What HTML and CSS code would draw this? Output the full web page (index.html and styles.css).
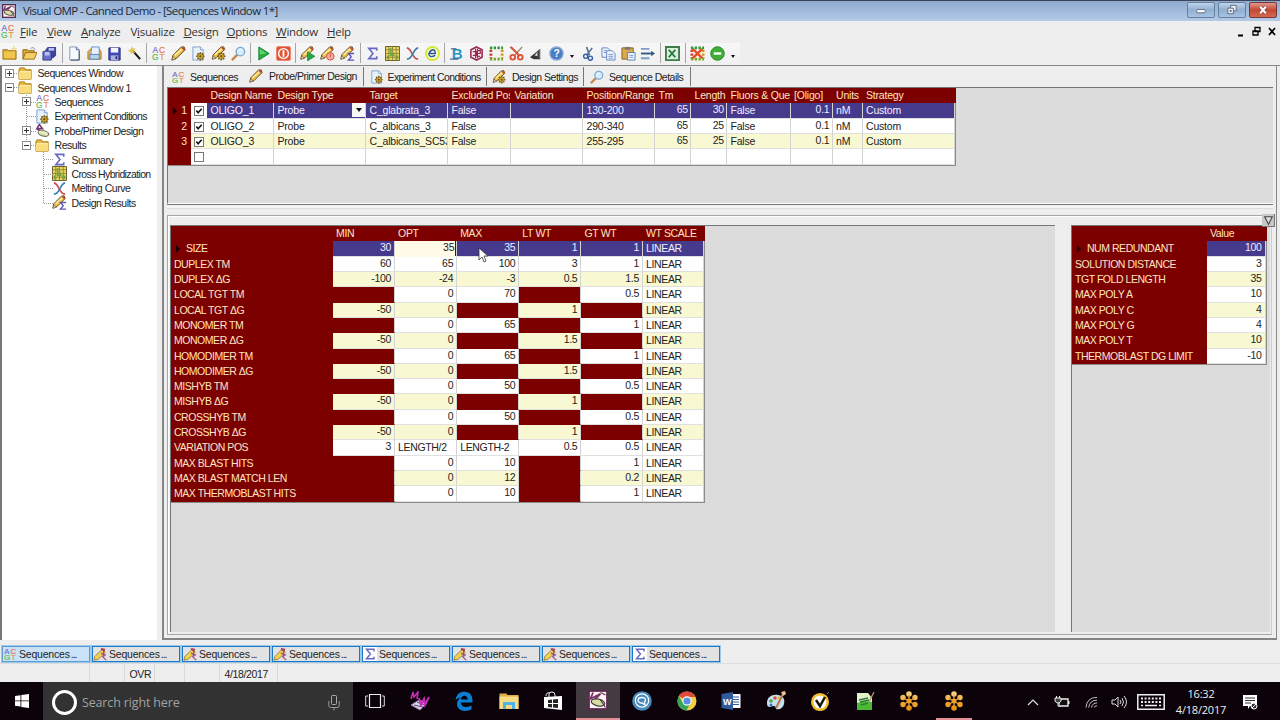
FILE: index.html
```html
<!DOCTYPE html>
<html lang="en">
<head>
    <meta charset="UTF-8">
    <title>Visual OMP - Canned Demo</title>
    <link rel="stylesheet" href="styles.css">
</head>
<body>
    <!-- icon sprite -->
    <svg class="sprite">
        <symbol id="omp" viewBox="0 0 16 16"><path d="M0 0h16v16H0z" fill="#5d294f"/><path d="M1.500 1.500h13v13h-13z" fill="#fff5f5"/><path d="M4 2L2 7l8-4-5 5" fill="none" stroke="#763768" stroke-width="1.500"/><ellipse cx="8" cy="10" rx="5.500" ry="2.700" transform="rotate(12 8 10)" fill="#d7dda0" stroke="#4c4146"/><path d="M10 2l4 2M10 8l4 6" stroke="#4c4146"/></symbol>
        <symbol id="primer" viewBox="0 0 16 16"><path d="M5 1L2 6l6 0-3-4M2 6l5 4" fill="none" stroke="#71356b" stroke-width="1.7"/><ellipse cx="9" cy="11" rx="5.8" ry="3" transform="rotate(15 9 11)" fill="#d8dfae" stroke="#676756"/><path d="M4 9l9 3" stroke="#f5f8d8"/></symbol>
        <symbol id="acgt" viewBox="0 0 16 16"><g font-family="Liberation Sans" font-size="9" stroke-width=".2"><text x="1.5" y="7.5" fill="#706ec8" stroke="#706ec8">A</text><text x="8.5" y="7.5" fill="#e96f54" stroke="#e96f54">C</text><text x="1" y="15" fill="#57bd54" stroke="#57bd54">G</text><text x="9" y="15" fill="#e99445" stroke="#e99445">T</text></g></symbol>
        <symbol id="folder" viewBox="0 0 16 16"><path d="M1 4l1-2h5l1 2h6v10H1z" fill="#e6b83e" stroke="#a87916"/><path d="M1 6h13v8H1z" fill="#f9dd7c"/><path d="M2 6h12" stroke="#fff4bd"/></symbol>
        <symbol id="newfolder" viewBox="0 0 16 16"><path d="M1 4h5l1 1h8v9H1z" fill="#e0aa2a" stroke="#9b7014"/><path d="M2 6h12v7H2z" fill="#f1c64c"/><path d="M13 0v6M10 3h6" stroke="#e9d37a"/></symbol>
        <symbol id="openfolder" viewBox="0 0 16 16"><path d="M1 14V4h5l1 1h6v3" fill="#dba935" stroke="#8e6414"/><path d="M1 14l3-7h12l-3 7z" fill="#f5ce68" stroke="#9b7014"/><path d="M9 3q3-3 5 1" fill="none" stroke="#87939b"/></symbol>
        <symbol id="saveall" viewBox="0 0 16 16"><path d="M6 1h9v9l-3 3H3V5z" fill="#3c459b"/><path d="M1 6h9v9H1z" fill="#6871c8" stroke="#343b8b"/><path d="M3 6h5v4H3zM7 2h6v3H7z" fill="#bac0ed"/></symbol>
        <symbol id="doc" viewBox="0 0 16 16"><path d="M3 1h7l3 3v11H3z" fill="#f7fbff" stroke="#7e95b4"/><path d="M10 1v3h3" fill="#cadaf0" stroke="#536c91"/><path d="M13 5v10H4" fill="none" stroke="#3c4a5c"/></symbol>
        <symbol id="print" viewBox="0 0 16 16"><path d="M1 6l3-3h9l2 3v8H1z" fill="#e9b253" stroke="#a87922"/><path d="M5 1h8v9H4z" fill="#e7f2ff" stroke="#6590c4"/><path d="M3 9h10v5H3z" fill="#b7d3f0" stroke="#5d85b3"/></symbol>
        <symbol id="save" viewBox="0 0 16 16"><path d="M2 2h12v13H2z" fill="#4248b7" stroke="#262b7b"/><path d="M4 2h8v5H4z" fill="#f3f6ff"/><path d="M4 10h8v5H4z" fill="#a9b1df"/><path d="M9 11h2v3H9z" fill="#2d326e"/></symbol>
        <symbol id="wand" viewBox="0 0 16 16"><path d="M6 5l8 9" stroke="#111" stroke-width="2.2"/><path d="M5 0l1 3 3-1-2 3 2 3-3-1-2 2V6L0 5l4-1z" fill="#e4c239"/></symbol>
        <symbol id="pencil" viewBox="0 0 16 16"><path d="M1 15l1-5L11 1h3l1 3-9 9z" fill="#efc24b" stroke="#554126"/><path d="M4 10l8-7" stroke="#fff0a4" stroke-width="1.5"/><path d="M11 2l3 3 1-2-2-2z" fill="#b44838"/><path d="M2 11l3 3-4 1z" fill="#f1d8a0" stroke="#4f4029" stroke-width=".6"/></symbol>
        <symbol id="gear" viewBox="0 0 16 16"><path d="M8 1v14M1 8h14M3 3l10 10M13 3L3 13" stroke="#6b5314" stroke-width="2.5"/><circle cx="8" cy="8" r="5" fill="#cfa82e" stroke="#6b5314"/><circle cx="8" cy="8" r="1.7" fill="#564318"/></symbol>
        <symbol id="docgear" viewBox="0 0 16 16"><path d="M2 1h8l3 3v11H2z" fill="#e6f1fc" stroke="#7e9fc6"/><path d="M10 1v3h3" fill="#fff" stroke="#7e9fc6"/><use href="#gear" x="5" y="6" width="10" height="10"/></symbol>
        <symbol id="pencilgear" viewBox="0 0 16 16"><use href="#pencil" width="16" height="15"/><use href="#gear" x="6" y="6" width="10" height="10"/></symbol>
        <symbol id="pencilrun" viewBox="0 0 16 16"><use href="#pencil" width="15" height="15"/><path d="M8 6l8 5-8 5z" fill="#23a847" stroke="#177332" stroke-width=".6"/></symbol>
        <symbol id="pencilstop" viewBox="0 0 16 16"><use href="#pencil" width="15" height="15"/><circle cx="11" cy="11" r="4" fill="#f3b2a5" stroke="#dd452d"/><path d="M11 8v4" stroke="#dd452d"/></symbol>
        <symbol id="pencilsum" viewBox="0 0 16 16"><use href="#pencil" width="15" height="15"/><path d="M15 8H9l3 3.5L9 15h6" fill="none" stroke="#5f54bb" stroke-width="1.4"/></symbol>
        <symbol id="pencilred" viewBox="0 0 16 16"><path d="M1 15l1-4 8-8 4 3-8 8z" fill="#f0d24b" stroke="#7a6330" stroke-width=".8"/><path d="M9 1l5 1-1 4-4-3z" fill="#a8405a"/><path d="M9 7l5 2-3 2 4 4" fill="none" stroke="#a65191" stroke-width="1.500"/><path d="M12 5v5" stroke="#6253b4"/></symbol>
        <symbol id="lens" viewBox="0 0 16 16"><path d="M7 9l-6 6" stroke="#c5894d" stroke-width="2.5"/><circle cx="10" cy="6" r="4.5" fill="#d5edff" stroke="#7ba9d5" stroke-width="1.5"/><path d="M8 5q1-2 3-1" fill="none" stroke="#fff"/></symbol>
        <symbol id="play" viewBox="0 0 16 16"><path d="M3 1l11 7-11 7z" fill="#22ae3d" stroke="#168136"/><path d="M4 3l7 5-7 1z" fill="#64d36e"/></symbol>
        <symbol id="stop" viewBox="0 0 16 16"><rect x=".5" y=".5" width="15" height="15" rx="2" fill="#e45431" stroke="#e88a70"/><circle cx="8" cy="8" r="5.2" fill="none" stroke="#fff" stroke-width="1.5"/><path d="M8 4.5v7" stroke="#fff" stroke-width="2"/></symbol>
        <symbol id="sigma" viewBox="0 0 16 16"><path d="M12.500 5V2.500H4L8.500 8 4 13.500h8.500V11" fill="none" stroke="#6868c3" stroke-width="1.7"/></symbol>
        <symbol id="heat" viewBox="0 0 16 16"><path d="M.5.5h15v15H.5z" fill="#ead75a" stroke="#615a27"/><path d="M1 4h14M1 8h14M1 12h14M4 1v14M8 1v14M12 1v14" stroke="#80783a" stroke-width=".8"/><path d="M5 2h2v5h3v3h4v4h-3v-3H5zM2 10h2v4H2z" fill="#79a243"/></symbol>
        <symbol id="melt" viewBox="0 0 16 16"><path d="M2 2c6 1 5 12 12 12" fill="none" stroke="#cc4a53" stroke-width="1.7"/><path d="M14 2C8 3 9 14 2 14" fill="none" stroke="#387fae" stroke-width="1.7"/></symbol>
        <symbol id="ering" viewBox="0 0 16 16"><circle cx="8" cy="8" r="7" fill="#f4fce0" stroke="#d1e82d" stroke-width="2"/><path d="M5 8h6q0-4-3-4-3 1-4 5 1 4 7 1" fill="none" stroke="#315695" stroke-width="1.5"/></symbol>
        <symbol id="blast" viewBox="0 0 16 16"><text x="3" y="14" font-family="Liberation Sans" font-weight="bold" font-size="16" fill="#2995c5">B</text><path d="M2 3h6M1 14h9" stroke="#174972"/></symbol>
        <symbol id="thermo" viewBox="0 0 16 16"><path d="M8 1l6 3v8l-6 3-6-3V4z" fill="#fbeef2" stroke="#982d54" stroke-width="1.7"/><path d="M7 3v10M9 3v10M4 6h4v4H4M9 5h3v3H9v3h3" fill="none" stroke="#982d54" stroke-width="1.3"/></symbol>
        <symbol id="dots" viewBox="0 0 16 16"><g fill="none" stroke-width="3" stroke-dasharray="2.5 1.5"><path d="M1 2h14" stroke="#2a9532"/><path d="M1 14h14" stroke="#73a923"/><path d="M2 4v9" stroke="#cc3f2c"/><path d="M14 4v9" stroke="#d19819"/></g></symbol>
        <symbol id="scissors" viewBox="0 0 16 16"><path d="M1 1l11 10M14 1L5 11" stroke="#9c8c82" stroke-width="1.5"/><circle cx="4" cy="12" r="2.5" fill="none" stroke="#df5036" stroke-width="2"/><circle cx="12" cy="12" r="2.5" fill="none" stroke="#df5036" stroke-width="2"/><path d="M2 1l8 8" stroke="#df5036" stroke-width="2"/></symbol>
        <symbol id="fin" viewBox="0 0 16 16"><path d="M1 12L12 3v11H5z" fill="#39353c"/><path d="M9 6l-3 4 3 1z" fill="#ddd"/><path d="M11 4v9" stroke="#8d6d88"/></symbol>
        <symbol id="help" viewBox="0 0 16 16"><circle cx="8" cy="8" r="7" fill="#477cc8" stroke="#8aa8d4" stroke-width="1.5"/><text x="4.7" y="12" fill="#fff" font-family="Liberation Sans" font-weight="bold" font-size="11">?</text></symbol>
        <symbol id="cut" viewBox="0 0 16 16"><path d="M6 1l3 9M12 2l-6 8" stroke="#556e91" stroke-width="1.7"/><circle cx="5" cy="11" r="2.2" fill="none" stroke="#315da3" stroke-width="1.5"/><circle cx="10" cy="13" r="2.2" fill="none" stroke="#315da3" stroke-width="1.5"/></symbol>
        <symbol id="copy" viewBox="0 0 16 16"><g fill="#eaf4ff" stroke="#6786bd"><path d="M1 2h6l2 2v8H1z"/><path d="M6 5h6l3 3v7H6z"/></g><path d="M3 5h3M3 7h3M8 9h5M8 11h5M8 13h5" stroke="#7893c9"/></symbol>
        <symbol id="paste" viewBox="0 0 16 16"><path d="M1 2h12v12H1z" fill="#d9aa4e" stroke="#866220"/><path d="M4 1h6v3H4z" fill="#7d756e"/><path d="M7 7h8v8H7z" fill="#eef6ff" stroke="#637bac"/><path d="M9 10h4M9 12h4" stroke="#7893c9"/></symbol>
        <symbol id="arrowrow" viewBox="0 0 16 16"><path d="M1 3h9M1 13h9" stroke="#7f9cc7" stroke-width="2"/><path d="M1 8h12" stroke="#315782" stroke-width="2"/><path d="M12 5l4 3-4 3z" fill="#315782"/></symbol>
        <symbol id="excel" viewBox="0 0 16 16"><path d="M1 1h14v14H1z" fill="#dceede" stroke="#3d7c48" stroke-width="2"/><path d="M4 4l7 8M11 4l-7 8" stroke="#22773a" stroke-width="2"/></symbol>
        <symbol id="dotsx" viewBox="0 0 16 16"><use href="#dots" width="16" height="16"/><path d="M3 3l10 10M13 3L3 13" stroke="#e74c27" stroke-width="2.5"/></symbol>
        <symbol id="minus" viewBox="0 0 16 16"><circle cx="8" cy="8" r="7.200" fill="#3eae35" stroke="#25842b"/><path d="M4 8h8" stroke="#fff" stroke-width="2.5"/></symbol>
        <symbol id="flower" viewBox="0 0 20 20"><g fill="#eda128"><circle cx="10" cy="3" r="2.8" fill="#f6cb79"/><circle cx="16" cy="6.5" r="2.7" fill="#f4bc58"/><circle cx="16" cy="13.5" r="2.7"/><circle cx="10" cy="17" r="2.8" fill="#e9920f"/><circle cx="4" cy="13.5" r="2.7"/><circle cx="4" cy="6.5" r="2.7" fill="#f4bc58"/></g><path d="M10 4v12M4.5 7l11 6.5M15.500 7l-11 6.500" stroke="#e9a032" stroke-width="1.3"/><circle cx="10" cy="10" r="2.5" fill="#eda128"/></symbol>
    </svg>

    <header class="titlebar">
        <svg class="app-icon"><use href="#omp"/></svg>
        <span class="title">Visual OMP - Canned Demo - [Sequences Window 1*]</span>
        <div class="win-buttons">
            <span class="win-btn"><svg viewBox="0 0 28 15"><rect x="9.500" y="7" width="9" height="3.500" rx="1" fill="#fff" stroke="#59677a"/></svg></span>
            <span class="win-btn"><svg viewBox="0 0 28 15"><g fill="#eef3fa" stroke="#59677a"><path d="M12.500 2.500h6v6h-6z"/><path d="M9.500 5.500h6v6h-6z"/></g><path d="M11.500 7.500h2v2h-2z" fill="#59677a"/></svg></span>
            <span class="win-btn close"><svg viewBox="0 0 28 15"><path d="M11 4l6 7M17 4l-6 7" stroke="#744" stroke-width="3.500"/><path d="M11 4l6 7M17 4l-6 7" stroke="#fff" stroke-width="2.200"/></svg></span>
        </div>
    </header>

    <nav class="menubar">
        <svg class="menu-icon"><use href="#acgt"/></svg>
        <span class="m-file"><u>F</u>ile</span><span class="m-view"><u>V</u>iew</span><span class="m-analyze"><u>A</u>nalyze</span><span class="m-visualize">V<u>i</u>sualize</span><span class="m-design"><u>D</u>esign</span><span class="m-options"><u>O</u>ptions</span><span class="m-window"><u>W</u>indow</span><span><u>H</u>elp</span>
        <svg class="mdi-buttons" viewBox="0 0 40 12"><path d="M1 9.500h5" stroke="#000" stroke-width="2"/><path d="M18 1.500h5v4h-5zM16 5h5v4h-5z" fill="#eee" stroke="#000" stroke-width="1.300"/><path d="M32 2l6 7M38 2l-6 7" stroke="#000" stroke-width="1.700"/></svg>
    </nav>

    <div class="toolbar">
        <svg><use href="#newfolder"/></svg><svg><use href="#openfolder"/></svg><svg><use href="#saveall"/></svg><i></i>
        <svg><use href="#doc"/></svg><svg><use href="#print"/></svg><svg><use href="#save"/></svg><svg><use href="#wand"/></svg><i></i>
        <svg><use href="#acgt"/></svg><svg><use href="#pencil"/></svg><svg><use href="#docgear"/></svg><svg><use href="#pencilgear"/></svg><svg><use href="#lens"/></svg><i></i>
        <svg><use href="#play"/></svg><svg><use href="#stop"/></svg><i></i>
        <svg><use href="#pencilrun"/></svg><svg><use href="#pencilstop"/></svg><svg><use href="#pencilsum"/></svg><i></i>
        <svg><use href="#sigma"/></svg><svg><use href="#heat"/></svg><svg><use href="#melt"/></svg><svg><use href="#ering"/></svg><i></i>
        <svg><use href="#blast"/></svg><svg><use href="#thermo"/></svg><svg><use href="#dots"/></svg><svg><use href="#scissors"/></svg><svg><use href="#fin"/></svg><svg><use href="#help"/></svg><b></b>
        <svg><use href="#cut"/></svg><svg><use href="#copy"/></svg><svg><use href="#paste"/></svg><svg><use href="#arrowrow"/></svg><i></i>
        <svg><use href="#excel"/></svg><i></i>
        <svg><use href="#dotsx"/></svg><svg><use href="#minus"/></svg><b></b>
    </div>

    <div class="workspace">
        <aside class="tree">
            <div class="node"><span class="exp plus"></span><svg><use href="#folder"/></svg>Sequences Window</div>
            <div class="node"><span class="exp"></span><svg><use href="#folder"/></svg>Sequences Window 1</div>
            <div class="branch">
                <div class="node"><span class="exp plus"></span><svg><use href="#acgt"/></svg>Sequences</div>
                <div class="node tight"><span class="exp none"></span><svg><use href="#docgear"/></svg>Experiment Conditions</div>
                <div class="node"><span class="exp plus"></span><svg><use href="#primer"/></svg>Probe/Primer Design</div>
                <div class="node"><span class="exp"></span><svg><use href="#folder"/></svg>Results</div>
                <div class="branch">
                    <div class="node"><span class="exp none"></span><svg><use href="#sigma"/></svg>Summary</div>
                    <div class="node tight"><span class="exp none"></span><svg><use href="#heat"/></svg>Cross Hybridization</div>
                    <div class="node"><span class="exp none"></span><svg><use href="#melt"/></svg>Melting Curve</div>
                    <div class="node"><span class="exp none"></span><svg><use href="#pencilsum"/></svg>Design Results</div>
                </div>
            </div>
        </aside>

        <main class="mdi">
            <div class="tabs">
                <div class="tab t1"><svg><use href="#acgt"/></svg>Sequences</div>
                <div class="tab t2 active"><svg><use href="#pencil"/></svg>Probe/Primer Design</div>
                <div class="tab t3 tight"><svg><use href="#docgear"/></svg>Experiment Conditions</div>
                <div class="tab t4"><svg><use href="#pencilgear"/></svg>Design Settings</div>
                <div class="tab t5"><svg><use href="#lens"/></svg>Sequence Details</div>
            </div>

            <section class="oligo-pane">
                <div class="grid oligos">
                    <div class="row head"><span></span><span></span><span>Design Name</span><span>Design Type</span><span>Target</span><span>Excluded Pos</span><span>Variation</span><span>Position/Range</span><span>Tm</span><span>Length</span><span>Fluors &amp; Que</span><span>[Oligo]</span><span>Units</span><span>Strategy</span></div>
                    <div class="row sel"><span class="rh cur">1</span><span class="chk"><svg viewBox="0 0 9 9"><path d="M1.500 4l2 2.500L7.500 2"/></svg></span><span>OLIGO_1</span><span class="combo">Probe<em></em></span><span>C_glabrata_3</span><span>False</span><span></span><span>130-200</span><span class="n">65</span><span class="n">30</span><span>False</span><span class="n">0.1</span><span>nM</span><span>Custom</span></div>
                    <div class="row"><span class="rh">2</span><span class="chk"><svg viewBox="0 0 9 9"><path d="M1.500 4l2 2.500L7.500 2"/></svg></span><span>OLIGO_2</span><span>Probe</span><span>C_albicans_3</span><span>False</span><span></span><span>290-340</span><span class="n">65</span><span class="n">25</span><span>False</span><span class="n">0.1</span><span>nM</span><span>Custom</span></div>
                    <div class="row alt"><span class="rh">3</span><span class="chk"><svg viewBox="0 0 9 9"><path d="M1.500 4l2 2.500L7.500 2"/></svg></span><span>OLIGO_3</span><span>Probe</span><span>C_albicans_SC53</span><span>False</span><span></span><span>255-295</span><span class="n">65</span><span class="n">25</span><span>False</span><span class="n">0.1</span><span>nM</span><span>Custom</span></div>
                    <div class="row"><span class="rh"></span><span class="chk"><svg viewBox="0 0 9 9"></svg></span><span></span><span></span><span></span><span></span><span></span><span></span><span></span><span></span><span></span><span></span><span></span><span></span></div>
                </div>
            </section>
            <div class="splitter"></div>

            <section class="params">
                <div class="pane weights">
                    <div class="grid">
                        <div class="row head"><span></span><span>MIN</span><span>OPT</span><span>MAX</span><span>LT WT</span><span>GT WT</span><span>WT SCALE</span></div>
                        <div class="row sel"><span class="rh cur">SIZE</span><span class="n">30</span><span class="n edit">35</span><span class="n">35</span><span class="n">1</span><span class="n">1</span><span>LINEAR</span></div>
                        <div class="row"><span class="rh">DUPLEX TM</span><span class="n">60</span><span class="n">65</span><span class="n">100</span><span class="n">3</span><span class="n">1</span><span>LINEAR</span></div>
                        <div class="row alt"><span class="rh">DUPLEX ΔG</span><span class="n">-100</span><span class="n">-24</span><span class="n">-3</span><span class="n">0.5</span><span class="n">1.5</span><span>LINEAR</span></div>
                        <div class="row"><span class="rh">LOCAL TGT TM</span><span class="x"></span><span class="n">0</span><span class="n">70</span><span class="x"></span><span class="n">0.5</span><span>LINEAR</span></div>
                        <div class="row alt"><span class="rh">LOCAL TGT ΔG</span><span class="n">-50</span><span class="n">0</span><span class="x"></span><span class="n">1</span><span class="x"></span><span>LINEAR</span></div>
                        <div class="row"><span class="rh">MONOMER TM</span><span class="x"></span><span class="n">0</span><span class="n">65</span><span class="x"></span><span class="n">1</span><span>LINEAR</span></div>
                        <div class="row alt"><span class="rh">MONOMER ΔG</span><span class="n">-50</span><span class="n">0</span><span class="x"></span><span class="n">1.5</span><span class="x"></span><span>LINEAR</span></div>
                        <div class="row"><span class="rh">HOMODIMER TM</span><span class="x"></span><span class="n">0</span><span class="n">65</span><span class="x"></span><span class="n">1</span><span>LINEAR</span></div>
                        <div class="row alt"><span class="rh">HOMODIMER ΔG</span><span class="n">-50</span><span class="n">0</span><span class="x"></span><span class="n">1.5</span><span class="x"></span><span>LINEAR</span></div>
                        <div class="row"><span class="rh">MISHYB TM</span><span class="x"></span><span class="n">0</span><span class="n">50</span><span class="x"></span><span class="n">0.5</span><span>LINEAR</span></div>
                        <div class="row alt"><span class="rh">MISHYB ΔG</span><span class="n">-50</span><span class="n">0</span><span class="x"></span><span class="n">1</span><span class="x"></span><span>LINEAR</span></div>
                        <div class="row"><span class="rh">CROSSHYB TM</span><span class="x"></span><span class="n">0</span><span class="n">50</span><span class="x"></span><span class="n">0.5</span><span>LINEAR</span></div>
                        <div class="row alt"><span class="rh">CROSSHYB ΔG</span><span class="n">-50</span><span class="n">0</span><span class="x"></span><span class="n">1</span><span class="x"></span><span>LINEAR</span></div>
                        <div class="row"><span class="rh">VARIATION POS</span><span class="n">3</span><span>LENGTH/2</span><span>LENGTH-2</span><span class="n">0.5</span><span class="n">0.5</span><span>LINEAR</span></div>
                        <div class="row"><span class="rh">MAX BLAST HITS</span><span class="x"></span><span class="n">0</span><span class="n">10</span><span class="x"></span><span class="n">1</span><span>LINEAR</span></div>
                        <div class="row alt"><span class="rh">MAX BLAST MATCH LEN</span><span class="x"></span><span class="n">0</span><span class="n">12</span><span class="x"></span><span class="n">0.2</span><span>LINEAR</span></div>
                        <div class="row"><span class="rh">MAX THERMOBLAST HITS</span><span class="x"></span><span class="n">0</span><span class="n">10</span><span class="x"></span><span class="n">1</span><span>LINEAR</span></div>
                    </div>
                    <svg class="cursor" viewBox="0 0 11 17"><path d="M1 1v12l3-3 2 5 2-1-2-5h4z" fill="#fff" stroke="#333" stroke-width=".8"/></svg>
                </div>
                <div class="pane limits">
                    <div class="grid">
                        <div class="row head"><span></span><span>Value</span></div>
                        <div class="row sel"><span class="rh cur">NUM REDUNDANT</span><span class="n">100</span></div>
                        <div class="row"><span class="rh">SOLUTION DISTANCE</span><span class="n">3</span></div>
                        <div class="row alt"><span class="rh">TGT FOLD LENGTH</span><span class="n">35</span></div>
                        <div class="row"><span class="rh">MAX POLY A</span><span class="n">10</span></div>
                        <div class="row alt"><span class="rh">MAX POLY C</span><span class="n">4</span></div>
                        <div class="row"><span class="rh">MAX POLY G</span><span class="n">4</span></div>
                        <div class="row alt"><span class="rh">MAX POLY T</span><span class="n">10</span></div>
                        <div class="row"><span class="rh">THERMOBLAST DG LIMIT</span><span class="n">-10</span></div>
                    </div>
                </div>
                <svg class="collapse" viewBox="0 0 12 12"><path d="M0 0h12v12H0z" fill="#c8c8c8"/><path d="M11.500 0v11.500H0" fill="none" stroke="#777"/><path d="M2.500 2.500h7l-3.500 7z" fill="#ddd" stroke="#444"/></svg>
            </section>
        </main>
    </div>

    <div class="window-tabs">
        <div class="wtab on"><svg><use href="#acgt"/></svg>Sequences<span>...</span></div>
        <div class="wtab"><svg><use href="#pencilred"/></svg>Sequences<span>...</span></div>
        <div class="wtab"><svg><use href="#pencilred"/></svg>Sequences<span>...</span></div>
        <div class="wtab"><svg><use href="#pencilred"/></svg>Sequences<span>...</span></div>
        <div class="wtab sum"><svg><use href="#sigma"/></svg>Sequences<span>...</span></div>
        <div class="wtab"><svg><use href="#pencilred"/></svg>Sequences<span>...</span></div>
        <div class="wtab"><svg><use href="#pencilred"/></svg>Sequences<span>...</span></div>
        <div class="wtab sum"><svg><use href="#sigma"/></svg>Sequences<span>...</span></div>
    </div>

    <div class="statusbar"><span></span><span></span><span>OVR</span><span></span><span></span><span>4/18/2017</span></div>

    <footer class="taskbar">
        <div class="start"><svg viewBox="0 0 14 14"><path d="M0 2l5.500-.8v5.300H0zM6.300 1L14 0v6.500H6.300zM0 7.300h5.500v5.300L0 11.800zM6.300 7.300H14V14l-7.700-1z" fill="#fff"/></svg></div>
        <div class="search">
            <span class="cortana"></span>Search right here
            <svg viewBox="0 0 12 16"><rect x="3.500" y=".5" width="5" height="9" rx="1" fill="none" stroke="#aaa"/><path d="M.8 6v4.500q0 2 2 2h6.400q2 0 2-2V6M6 12.500V15.500" fill="none" stroke="#999"/></svg>
        </div>
        <div class="apps">
            <span><svg viewBox="0 0 20 20"><path d="M4.500 3.500h11v13h-11z" fill="none" stroke="#eee" stroke-width="1.200"/><path d="M3 5H.7v10H3M17 5h2.300v10H17" fill="none" stroke="#ddd"/></svg></span>
            <span><svg viewBox="0 0 20 20"><path d="M1 14l8-5 8 3-7 7z" fill="#dcd4ea" stroke="#8a7ca2"/><path d="M4 14l9 2M7 11l7 3" stroke="#554d71"/><path d="M1 8l2-7 1 5 4-5-1 7" fill="none" stroke="#c52cb8" stroke-width="1.600"/><path d="M9 7l2 7 3-6 1 6 4-8" fill="none" stroke="#c52cb8" stroke-width="2"/></svg></span>
            <span><svg viewBox="0 0 20 20"><path d="M1.500 9C2.500 3 6 .8 10 .8c6 0 9 4 8.500 10.700H7c0 3 2 4.500 5 4.500 2.500 0 4-.5 5.500-1.400v3.700c-2 1.200-4 1.700-6.500 1.700-5 0-8-3-8-7 0-3 1.500-5 4-6.200C4.500 7 2.500 8 1.500 9zM7 8.500h6.700C13.700 6 12 4.800 10.300 4.800S7 6.500 7 8.500z" fill="#0b7ed2"/></svg></span>
            <span><svg viewBox="0 0 20 20"><path d="M.5 4V2.500h7l1 1.500h11v14H.5z" fill="#dfae49"/><path d="M.5 5.500h19V18H.5z" fill="#f8dc83"/><path d="M4 18v-7h12v7h-3v-4H7v4z" fill="#4fb5e4"/></svg></span>
            <span><svg viewBox="0 0 20 20"><path d="M6 6V3q0-2 3-2t3 3v2M3 5q0-4 4-3" fill="none" stroke="#eee"/><path d="M1 6l18-1v14L1 17z" fill="#fff"/><path d="M5 9l4-.4V12H5zM10 8.500l5-.5v4h-5zM5 13h4v3.500l-4-.4zM10 13h5v4l-5-.5z" fill="#222"/></svg></span>
            <span class="running"><svg><use href="#omp"/></svg></span>
            <span><svg viewBox="0 0 20 20"><circle cx="10" cy="10" r="9.800" fill="#4788be"/><circle cx="10" cy="9.500" r="6.700" fill="none" stroke="#fff" stroke-width="1.200"/><path d="M10 6.500c-5 0-5.500 5.500 0 5.500l3 2-.5-3C15 9 13 6.500 10 6.500z" fill="none" stroke="#fff" stroke-width="1.300"/></svg></span>
            <span><svg viewBox="0 0 20 20"><circle cx="10" cy="10" r="9.500" fill="#f6ce45"/><path d="M10 10L1.800 5A9.500 9.500 0 0 1 18.500 6H10z" fill="#dc4b3c"/><path d="M1.800 5A9.500 9.500 0 0 0 9.500 19.500l4-7.500H6z" fill="#38a457"/><circle cx="10" cy="10" r="4.700" fill="#fff"/><circle cx="10" cy="10" r="3.600" fill="#548ee8"/></svg></span>
            <span><svg viewBox="0 0 20 20"><path d="M10 3h9.500v14H10z" fill="#fff"/><path d="M12 6h6M12 8.500h6M12 11h6M12 13.500h6" stroke="#315b9e"/><path d="M.5 3L12 1v18L.5 17z" fill="#315b9e"/><text x="2" y="13.500" font-family="Liberation Sans" font-weight="bold" font-size="9" fill="#fff">W</text></svg></span>
            <span><svg viewBox="0 0 20 20"><path d="M1 12C1 6 6 3 12 4s7 5 6 9-4 6-8 5c0-4-3-3-6-2-2 0-3-1-3-4z" fill="#c5dfec"/><circle cx="5" cy="10" r="1.800" fill="#45a450"/><circle cx="9" cy="7" r="1.700" fill="#d74b3d"/><circle cx="13" cy="7" r="1.500" fill="#eab53b"/><circle cx="5" cy="14" r="1.500" fill="#3971c2"/><path d="M10 17L17 3" stroke="#b47947" stroke-width="2"/><path d="M15 1l4-1 1 3-3 2z" fill="#efc19a"/></svg></span>
            <span><svg viewBox="0 0 20 20"><circle cx="10" cy="11" r="7.800" fill="#fff" stroke="#f1bd2d" stroke-width="2.500"/><path d="M6 9l4 6 5-9" fill="none" stroke="#17130d" stroke-width="2.500"/><path d="M17 3l2-2" stroke="#777"/></svg></span>
            <span><svg viewBox="0 0 20 20"><path d="M2 2h11l4 5v12H2z" fill="#dff3ca"/><path d="M2 12q8-3 15-1v8H2z" fill="#4bb935"/><path d="M4 9l9-2M5 11l9-2M6 14l7-2" stroke="#347834" stroke-width="1.500"/><path d="M19 1l-5 10" stroke="#bf9163" stroke-width="1.300"/></svg></span>
            <span><svg><use href="#flower"/></svg></span>
            <span class="background"><svg><use href="#flower"/></svg></span>
        </div>
        <div class="tray">
            <svg class="t-up" viewBox="0 0 12 12"><path d="M1 9l5-5 5 5" fill="none" stroke="#ddd" stroke-width="1.200"/></svg>
            <svg class="t-power" viewBox="0 0 16 14"><path d="M5 4h9v7H5z" fill="#111" stroke="#eee" stroke-width="1.300"/><path d="M14 6h1.500v3H14z" fill="#eee"/><path d="M1 3h6v3q-1 2-3 2T1 6zM2.500 1v2M5.500 1v2M4 8v3h2" fill="#444" stroke="#eee"/></svg>
            <svg class="t-wifi" viewBox="0 0 14 14"><path d="M1 13Q2 2 13 2M4 13Q5 5 13 5M7 13q1-5 6-5M10 13q0-2 3-2" fill="none" stroke="#ccc"/></svg>
            <svg class="t-vol" viewBox="0 0 16 14"><path d="M1 5h3l3-3v10L4 9H1zM9 5q2 2 0 4M11 3q3 4 0 8M13 1q5 6 0 12" fill="none" stroke="#ddd"/></svg>
            <svg class="t-kbd" viewBox="0 0 28 16"><path d="M.8.8h26.400v14.400H.800z" fill="none" stroke="#eee" stroke-width="1.500"/><path d="M4 4.500h20M4 8h20" stroke="#eee" stroke-width="2" stroke-dasharray="2 1.600"/><path d="M4 11.500h2M8 11.500h12M22 11.500h2" stroke="#eee" stroke-width="1.500"/></svg>
            <div class="clock">16:32<br>4/18/2017</div>
            <svg class="t-note" viewBox="0 0 16 16"><path d="M1 1h14v11H8l-2 3v-3H1z" fill="#fff"/><path d="M3 4h10M3 6.500h10M3 9h6" stroke="#333"/><circle cx="12" cy="12" r="3" fill="#333" stroke="#fff"/><path d="M10 14l4-4" stroke="#fff"/></svg>
        </div>
    </footer>
</body>
</html>
```
FILE: styles.css
```css
* {
    box-sizing: border-box;
}

body {
    margin: 0;
    width: 1280px;
    height: 720px;
    overflow: hidden;
    display: flex;
    flex-direction: column;
    background: #eeeeee;
    font-family: "Liberation Sans", Arial, sans-serif;
    font-size: 10.5px;
    letter-spacing: -0.35px;
    color: #222;
}

.sprite {
    position: absolute;
    width: 0;
    height: 0;
}

svg {
    flex: none;
    letter-spacing: 0;
}

/* title bar and menu */
.titlebar {
    height: 21px;
    flex: none;
    display: flex;
    align-items: center;
    padding-left: 2px;
    border-top: 1px solid #3c4456;
    background: linear-gradient(#8eaad0, #b3cbe7);
}

.app-icon {
    width: 14px;
    height: 14px;
}

.title {
    margin-left: 7px;
    margin-top: -1px;
    font-family: "Open Sans", sans-serif;
    font-size: 11.5px;
    letter-spacing: -0.62px;
    color: #1c2838;
}

.win-buttons {
    display: flex;
    gap: 3px;
    margin-left: auto;
    align-self: flex-start;
    padding: 1px 3px 0 0;
}

.win-btn {
    width: 28px;
    height: 16px;
    border: 1px solid #64809f;
    border-radius: 2px;
    background: linear-gradient(#c0d3ea, #91aed2 50%, #a9c4e2);
}

.win-btn svg {
    display: block;
    width: 26px;
    height: 14px;
}

.close {
    border-color: #7a3535;
    background: linear-gradient(#df9a8c, #c34733 50%, #d36b54);
}

.menubar {
    height: 22px;
    flex: none;
    display: flex;
    align-items: center;
    padding-bottom: 2px;
    font-family: "Open Sans", sans-serif;
    font-size: 11.5px;
    letter-spacing: -0.25px;
    color: #333;
}

.menu-icon {
    width: 15px;
    height: 15px;
    margin-right: 5px;
}

.menubar u {
    text-underline-offset: 1px;
}

.m-file { width: 27px; }
.m-view { width: 34px; }
.m-analyze { width: 49.5px; }
.m-visualize { width: 53px; }
.m-design { width: 43px; }
.m-options { width: 49.5px; }
.m-window { width: 51px; }

.mdi-buttons {
    width: 40px;
    height: 12px;
    margin: 1px 3px 0 auto;
}

/* toolbar */
.toolbar {
    height: 22px;
    flex: none;
    display: flex;
    align-items: center;
    width: 740px;
    padding-bottom: 2px;
    background: linear-gradient(#f7f7f7, #f0f0f0);
}

.toolbar svg {
    width: 15px;
    height: 15px;
    margin: 0 2.46px;
}

.toolbar i {
    width: 4.8px;
    height: 20px;
    border-left: 1px solid #a5a5a5;
    transform: translateX(2px);
}

.toolbar b {
    width: 12px;
    display: flex;
    justify-content: center;
    padding-top: 6px;
}

.toolbar b::before {
    content: "";
    border: 2.5px solid transparent;
    border-top: 3px solid #111;
    border-bottom: 0;
}

/* tree and main window */
.workspace {
    height: 575px;
    flex: none;
    display: flex;
    border-top: 1.5px solid #888;
}

.tree {
    width: 157px;
    flex: none;
    padding: 0 0 0 3px;
    border-left: 2px solid #777;
    background: #fff;
    letter-spacing: -0.45px;
}

.node {
    height: 14.4px;
    display: flex;
    align-items: center;
    white-space: nowrap;
    position: relative;
}

.tight {
    letter-spacing: -0.63px;
}

.node svg {
    width: 15px;
    height: 15px;
    margin: 0 4.5px 0 4px;
}

.branch {
    margin-left: 17px;
    position: relative;
}

.branch::before {
    content: "";
    position: absolute;
    left: 4px;
    top: 0;
    bottom: 7px;
    border-left: 1px dotted #999;
}

.branch:has(.branch)::before {
    bottom: 64px;
}

.exp {
    width: 9px;
    height: 9px;
    border: 1px solid #8c8c8c;
    background: linear-gradient(#333, #333) center / 5px 1px no-repeat #fff;
    z-index: 1;
}

.exp.plus {
    background: linear-gradient(#333, #333) center / 5px 1px no-repeat, linear-gradient(#333, #333) center / 1px 5px no-repeat, #fff;
}

.exp.none {
    border: 0;
    background: none;
}

.node::before {
    content: "";
    position: absolute;
    left: 5px;
    top: 7px;
    width: 9px;
    border-top: 1px dotted #999;
}

.mdi {
    flex: 1;
    display: flex;
    flex-direction: column;
    margin: 0 3px 0 5px;
    padding-left: 3px;
    border-left: 2px solid #858585;
    border-right: 1px solid #888;
    border-bottom: 2px solid #858585;
}

.tabs {
    height: 21px;
    flex: none;
    display: flex;
    padding-top: 1px;
}

.tab {
    display: flex;
    align-items: center;
    height: 19px;
    padding-top: 1px;
    white-space: nowrap;
    letter-spacing: -0.5px;
    border-right: 1px solid #777;
}

.tab.tight {
    letter-spacing: -0.6px;
}

.tab svg {
    width: 14px;
    height: 14px;
}

.t1 { width: 75px; padding-left: 4px; border: 0; }
.t1 svg { margin-right: 5px; }
.t2 { width: 122px; padding-left: 7px; }
.t2 svg { margin-right: 6px; }
.t3 { width: 123px; padding-left: 6px; }
.t3 svg { margin-right: 3.5px; }
.t4 { width: 97px; padding-left: 5px; }
.t4 svg { margin-right: 6px; }
.t5 { width: 107px; padding-left: 6px; }
.t5 svg { margin-right: 5px; }

.tab.active {
    padding-top: 0;
    padding-bottom: 1px;
}

.oligo-pane {
    height: 117px;
    flex: none;
    width: 1106px;
    background: #dcdcdc;
    border-top: 1.5px solid #777;
    border-left: 1px solid #777;
    border-bottom: 1px solid #fff;
}

.splitter {
    height: 11px;
    flex: none;
    width: 1106px;
    border-top: 1.5px solid #777;
    background: linear-gradient(#f4f4f4 3px, #ddd 3px, #ddd 4px, #eee 4px);
}

.params {
    flex: 1;
    display: flex;
    gap: 16px;
    margin: 0 4px 3px 0;
    padding: 9px 1px 2px 2px;
    border: 1px solid #a6a6a6;
    border-right-color: #ccc;
    box-shadow: inset 1px 1px #fff;
    position: relative;
}

.pane {
    background: #dcdcdc;
    border-top: 1px solid #777;
    border-left: 1px solid #777;
    position: relative;
}

.weights {
    width: 885px;
    flex: none;
}

.limits {
    flex: 1;
}

.collapse {
    position: absolute;
    right: -4px;
    top: -2px;
    width: 13px;
    height: 13px;
}

/* data grids */
.grid {
    width: max-content;
    border-bottom: 1px solid #8a8a8a;
}

.row {
    display: grid;
    height: 15.32px;
    background: #fff;
    border-right: 1px solid #8a8a8a;
}

.oligos .row {
    grid-template-columns: 23px 16px 67px 92px 82px 63px 72px 72px 36px 36px 63.5px 42px 30px 92.5px;
}

.weights .row {
    grid-template-columns: 162px 62.1px 62.1px 62.1px 62.1px 61.6px 61px;
}

.limits .row {
    grid-template-columns: 135px 58.5px;
}

.row span {
    padding: 0 3px;
    line-height: 15px;
    white-space: nowrap;
    overflow: hidden;
    border-right: 1px solid #d4d4d4;
    border-bottom: 1px solid #e0e0e0;
}

.oligos .row span {
    padding-left: 3.5px;
    letter-spacing: -0.2px;
}

.row .n {
    text-align: right;
    line-height: 13.5px;
    letter-spacing: -0.3px;
}

.oligos .row .n {
    padding-right: 2px;
}

.alt {
    background: #f8f8d3;
}

.sel {
    background: #463a8c;
    color: #f1edff;
}

.head,
.head span,
.row .rh {
    background: #7d0000;
    color: #ffe4c2;
    border-color: #7d0000;
}

.weights .rh,
.limits .rh {
    letter-spacing: -0.46px;
}

.row .x {
    background: #7d0000;
    border-bottom-color: #7d0000;
}

.row .cur {
    padding-left: 15px;
    position: relative;
}

.row .cur::before {
    content: "";
    position: absolute;
    left: 5px;
    top: 4px;
    border: 4px solid transparent;
    border-left: 4px solid #1a0000;
    border-right: 0;
}

.oligos .row .rh {
    padding: 0 3px 0 0;
    text-align: right;
}

.row .edit {
    background: #fffbe6;
    color: #222;
    padding-right: 2px;
    border-bottom-color: #fffbe6;
    box-shadow: inset -1px 0 #222;
}

.oligos .row .chk {
    padding: 3px 0 0 3px;
    background: #fff;
    line-height: 0;
    border-right: 0;
}

.oligos .alt .chk {
    background: #f8f8d3;
}

.chk svg {
    width: 10px;
    height: 10px;
    border: 1px solid #777;
    background: #fff;
}

.chk path {
    fill: none;
    stroke: #111;
    stroke-width: 1.8;
}

.row .combo {
    display: flex;
    justify-content: space-between;
    padding-right: 0;
}

.combo em {
    width: 13px;
    height: 14px;
    background: #f7f7f7;
    display: flex;
    align-items: center;
    justify-content: center;
}

.combo em::before {
    content: "";
    border: 3px solid transparent;
    border-top: 4px solid #111;
    border-bottom: 0;
}

.cursor {
    position: absolute;
    left: 307px;
    top: 21px;
    width: 11px;
    height: 17px;
}

/* bottom bars */
.window-tabs {
    height: 24px;
    flex: none;
    display: flex;
    gap: 2px;
    padding: 6px 0 0 2px;
    border-bottom: 1px solid #ddd;
}

.wtab {
    width: 88px;
    height: 16px;
    display: flex;
    align-items: center;
    padding-bottom: 1px;
    border: 1.5px solid #1b78c8;
    outline: 0.5px solid #9cc8ea;
    background: #e2e2e2;
    letter-spacing: -0.2px;
}

.wtab.on {
    background: #c9e2f8;
    border-color: #5b9dd2;
}

.wtab svg {
    width: 14px;
    height: 14px;
    margin-right: 2px;
}

.wtab.sum svg {
    background: #fff;
}

.wtab span {
    margin-left: 1px;
    letter-spacing: -1px;
}

.statusbar {
    height: 17px;
    flex: none;
    display: grid;
    grid-template-columns: 90px 35px 30px 30px 35px 58px;
    line-height: 20px;
}

.statusbar span {
    border-right: 1px solid #dadada;
    padding-left: 4.5px;
}

.taskbar {
    height: 38px;
    flex: none;
    display: flex;
    margin-top: auto;
    background: #0c0209;
    color: #eee;
    font-family: "Open Sans", sans-serif;
}

.start {
    width: 43px;
    display: grid;
    place-items: center;
}

.start svg {
    width: 14px;
    height: 14px;
}

.search {
    width: 310px;
    display: flex;
    align-items: center;
    padding: 3px 13px 0 9px;
    background: #323232;
    color: #a2a2a2;
    font-size: 12.5px;
    letter-spacing: -0.15px;
}

.cortana {
    width: 25px;
    height: 25px;
    margin-right: 5px;
    border: 3px solid #fff;
    border-radius: 50%;
}

.search svg {
    width: 12px;
    height: 16px;
    margin-left: auto;
}

.apps {
    display: flex;
}

.apps span {
    width: 44.5px;
    display: grid;
    place-items: center;
}

.apps svg {
    width: 20px;
    height: 20px;
}

.running {
    background: #443a42;
    border-bottom: 2px solid #e58e96;
}

.background {
    background: linear-gradient(#e58e96, #e58e96) bottom center / 36px 2px no-repeat;
}

.tray {
    flex: 1;
    display: flex;
    align-items: center;
    padding: 1px 0 0 51px;
}

.t-up { width: 12px; height: 12px; margin-right: 15px; }
.t-power { width: 16px; height: 14px; margin-right: 15px; }
.t-wifi { width: 13px; height: 14px; margin-right: 13px; }
.t-vol { width: 16px; height: 14px; margin-right: 10px; }
.t-kbd { width: 28px; height: 16px; margin-right: 9px; }

.clock {
    width: 54px;
    text-align: center;
    font-size: 11px;
    line-height: 16px;
    letter-spacing: -0.2px;
}

.t-note { width: 16px; height: 16px; margin-left: 14px; }
```
